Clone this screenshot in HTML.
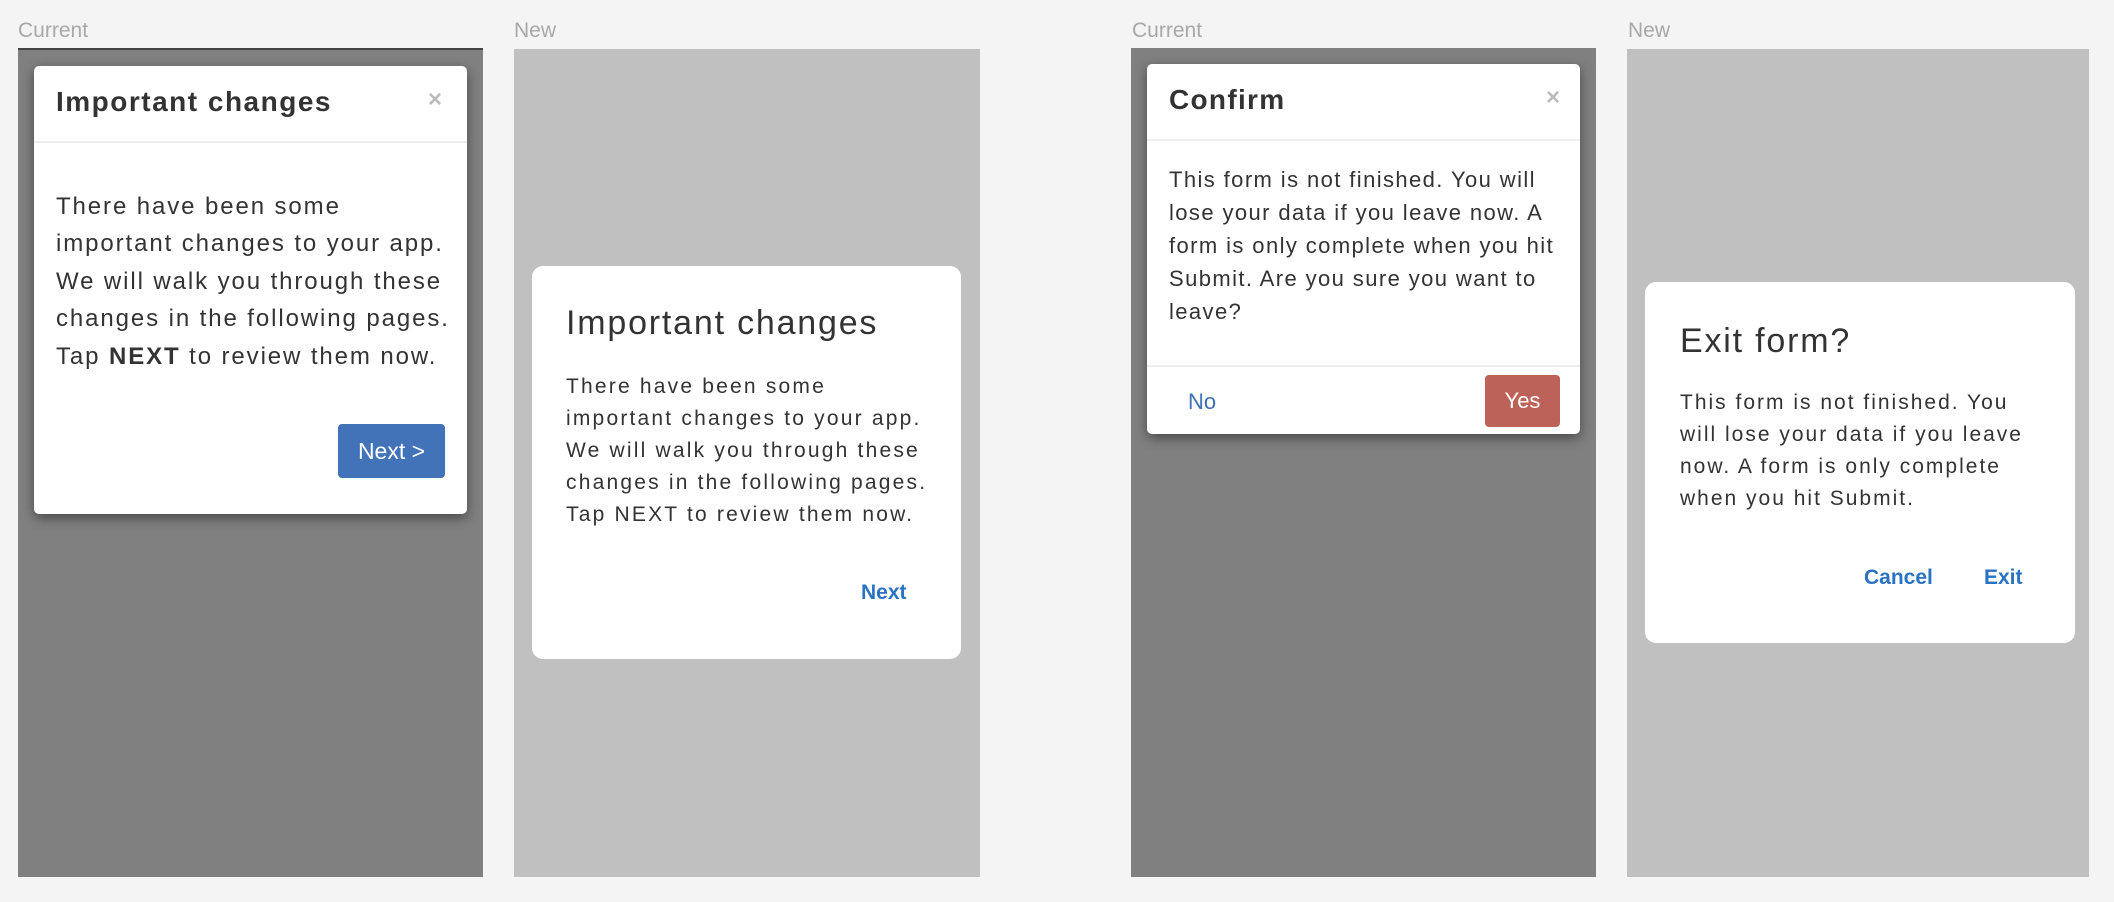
<!DOCTYPE html>
<html><head><meta charset="utf-8"><style>
*{margin:0;padding:0;box-sizing:border-box}
body{width:2114px;height:902px;background:#f4f4f4;position:relative;overflow:hidden;font-family:"Liberation Sans",sans-serif;color:#333}
.a{position:absolute}
.lbl{font-size:21px;color:#a8a8a8;top:19px}
.dark{background:#808080}
.light{background:#c0c0c0}
.d1{background:#fff;border-radius:5px;box-shadow:0 4px 12px rgba(0,0,0,.45)}
.d2{background:#fff;border-radius:11px}
.line{white-space:nowrap}
</style></head><body>
<div class="a lbl" style="left:18px">Current</div>
<div class="a lbl" style="left:514px">New</div>
<div class="a lbl" style="left:1132px">Current</div>
<div class="a lbl" style="left:1628px">New</div>

<div class="a dark" style="left:18px;top:48px;width:465px;height:829px;border-top:2px solid #444"></div>
<div class="a light" style="left:514px;top:49px;width:466px;height:828px"></div>
<div class="a dark" style="left:1131px;top:48px;width:465px;height:829px"></div>
<div class="a light" style="left:1627px;top:49px;width:462px;height:828px"></div>

<!-- dialog 1 -->
<div class="a d1" style="left:34px;top:66px;width:433px;height:448px">
  <div class="a line" style="left:22px;top:20px;font-size:28px;font-weight:bold;color:#333;letter-spacing:1.5px">Important changes</div>
  <div class="a" style="left:394px;top:20px;font-size:24px;color:#bbb;font-weight:bold">×</div>
  <div class="a" style="left:0;top:75px;width:433px;height:2px;background:#eee"></div>
  <div class="a line" style="left:22px;top:122px;font-size:24px;line-height:37.4px;letter-spacing:1.9px">There have been some<br>important changes to your app.<br>We will walk you through these<br>changes in the following pages.<br>Tap <b>NEXT</b> to review them now.</div>
  <div class="a" style="left:304px;top:358px;width:107px;height:54px;background:#4272b7;border-radius:4px;color:#fff;font-size:23px;line-height:54px;text-align:center">Next &gt;</div>
</div>

<!-- dialog 2 -->
<div class="a d2" style="left:532px;top:266px;width:429px;height:393px">
  <div class="a line" style="left:34px;top:38px;font-size:34px;color:#333;letter-spacing:1.8px">Important changes</div>
  <div class="a line" style="left:34px;top:105px;font-size:21px;line-height:32px;letter-spacing:2.2px">There have been some<br>important changes to your app.<br>We will walk you through these<br>changes in the following pages.<br>Tap NEXT to review them now.</div>
  <div class="a" style="left:329px;top:315px;font-size:21px;color:#2a73c2;font-weight:bold">Next</div>
</div>

<!-- dialog 3 -->
<div class="a d1" style="left:1147px;top:64px;width:433px;height:370px">
  <div class="a line" style="left:22px;top:20px;font-size:28px;font-weight:bold;color:#333;letter-spacing:1.3px">Confirm</div>
  <div class="a" style="left:399px;top:20px;font-size:24px;color:#bbb;font-weight:bold">×</div>
  <div class="a" style="left:0;top:75px;width:433px;height:2px;background:#eee"></div>
  <div class="a line" style="left:22px;top:99px;font-size:22px;line-height:33px;letter-spacing:1.4px">This form is not finished. You will<br>lose your data if you leave now. A<br>form is only complete when you hit<br>Submit. Are you sure you want to<br>leave?</div>
  <div class="a" style="left:0;top:301px;width:433px;height:2px;background:#eee"></div>
  <div class="a" style="left:41px;top:325px;font-size:22px;color:#3f6fb5">No</div>
  <div class="a" style="left:338px;top:311px;width:75px;height:52px;background:#bc6259;border-radius:4px;color:#fff;font-size:22px;line-height:52px;text-align:center">Yes</div>
</div>

<!-- dialog 4 -->
<div class="a d2" style="left:1645px;top:282px;width:430px;height:361px">
  <div class="a line" style="left:35px;top:40px;font-size:34px;color:#333;letter-spacing:1.8px">Exit form?</div>
  <div class="a line" style="left:35px;top:105px;font-size:21px;line-height:32px;letter-spacing:2px">This form is not finished. You<br>will lose your data if you leave<br>now. A form is only complete<br>when you hit Submit.</div>
  <div class="a" style="left:219px;top:284px;font-size:21px;color:#2a73c2;font-weight:bold">Cancel</div>
  <div class="a" style="left:339px;top:284px;font-size:21px;color:#2a73c2;font-weight:bold">Exit</div>
</div>
</body></html>
